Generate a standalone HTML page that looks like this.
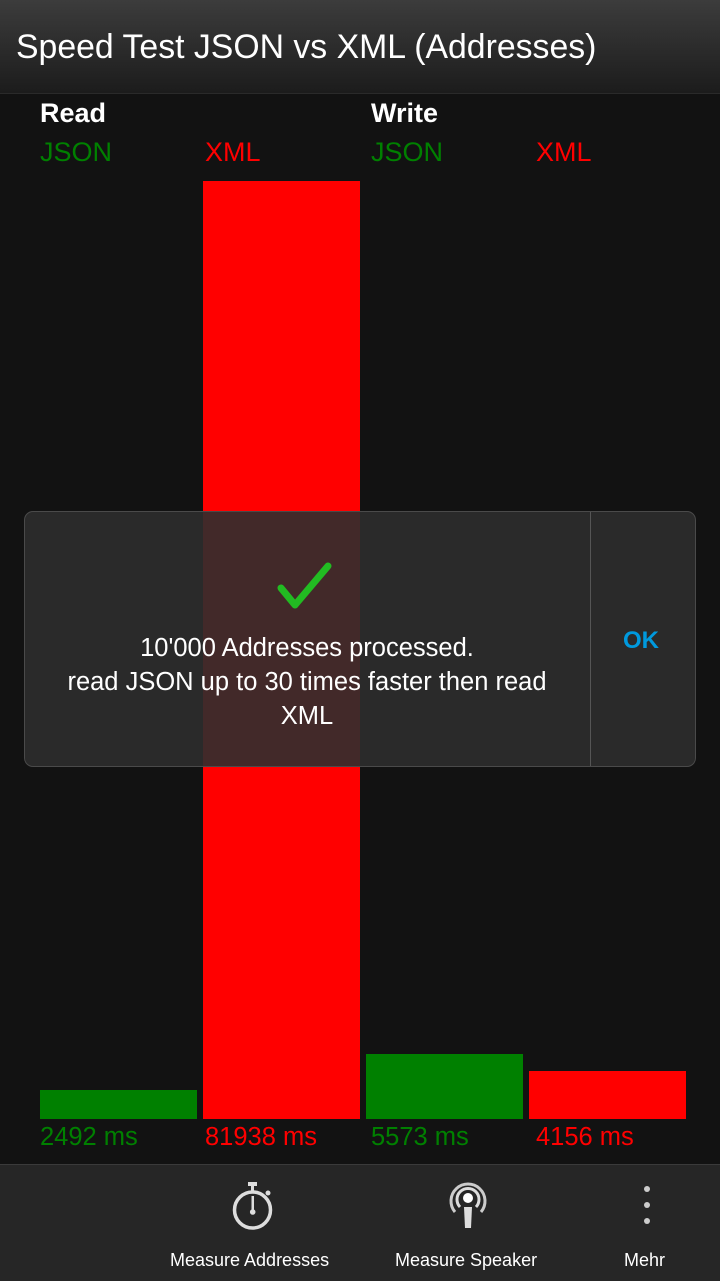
<!DOCTYPE html>
<html><head><meta charset="utf-8"><style>
body{margin:0;width:720px;height:1280px;background:#121212;font-family:"Liberation Sans",sans-serif;position:relative;overflow:hidden}
.t{position:absolute;white-space:nowrap}
.bar{position:absolute}
</style></head><body>
<div style="position:absolute;left:0;top:0;width:720px;height:93px;background:linear-gradient(#3c3c3c,#1c1c1c);border-bottom:1px solid #2a2a2a"></div>
<div class="t" style="left:16px;top:28px;font-size:33.8px;color:#fff">Speed Test JSON vs XML (Addresses)</div>
<div class="t" style="left:40px;top:98px;font-size:27px;font-weight:bold;color:#fff">Read</div>
<div class="t" style="left:371px;top:98px;font-size:27px;font-weight:bold;color:#fff">Write</div>
<div class="t" style="left:40px;top:137px;font-size:27px;color:#008000">JSON</div>
<div class="t" style="left:205px;top:137px;font-size:27px;color:#f00">XML</div>
<div class="t" style="left:371px;top:137px;font-size:27px;color:#008000">JSON</div>
<div class="t" style="left:536px;top:137px;font-size:27px;color:#f00">XML</div>
<div class="bar" style="left:40px;top:1090px;width:157px;height:29px;background:#008000"></div>
<div class="bar" style="left:203px;top:181px;width:157px;height:938px;background:#f00"></div>
<div class="bar" style="left:366px;top:1054px;width:157px;height:65px;background:#008000"></div>
<div class="bar" style="left:529px;top:1071px;width:157px;height:48px;background:#f00"></div>
<div class="t" style="left:40px;top:1123px;font-size:25.5px;color:#008000">2492 ms</div>
<div class="t" style="left:205px;top:1123px;font-size:25.5px;color:#f00">81938 ms</div>
<div class="t" style="left:371px;top:1123px;font-size:25.5px;color:#008000">5573 ms</div>
<div class="t" style="left:536px;top:1123px;font-size:25.5px;color:#f00">4156 ms</div>
<div style="position:absolute;left:24px;top:511px;width:670px;height:254px;border:1px solid #4a4a4a;border-radius:9px;background:rgba(45,45,45,0.9)"></div>
<div style="position:absolute;left:590px;top:512px;width:1px;height:254px;background:#555"></div>
<svg style="position:absolute;left:275px;top:560px" width="60" height="52"><path d="M6 28 L20 45 L53 6" stroke="#22bb22" stroke-width="7" fill="none" stroke-linecap="round" stroke-linejoin="round"/></svg>
<div class="t" style="left:24px;top:631px;width:566px;text-align:center;font-size:25.5px;line-height:34px;color:#fff;white-space:normal">10'000 Addresses processed.<br>read JSON up to 30 times faster then read<br>XML</div>
<div class="t" style="left:623px;top:627px;font-size:24px;font-weight:bold;color:#0099dd">OK</div>
<div style="position:absolute;left:0;top:1164px;width:720px;height:116px;background:#262626;border-top:1px solid #3a3a3a"></div>
<svg style="position:absolute;left:228px;top:1180px" width="50" height="52"><rect x="20" y="2" width="9" height="4" fill="#ddd"/><rect x="23" y="5" width="3" height="6" fill="#ddd"/><circle cx="24.5" cy="30" r="18" stroke="#ddd" stroke-width="3.5" fill="none"/><rect x="23.5" y="16" width="2.5" height="16" fill="#ddd"/><circle cx="24.7" cy="32" r="2.8" fill="#ddd"/><circle cx="40" cy="13" r="2.5" fill="#ddd"/></svg>
<svg style="position:absolute;left:444px;top:1178px" width="48" height="52"><path d="M11 34 A17 17 0 1 1 37 34" stroke="#ccc" stroke-width="3" fill="none"/><path d="M16 29 A11 11 0 1 1 32 29" stroke="#ddd" stroke-width="3" fill="none"/><circle cx="24" cy="20" r="5" fill="#fff"/><path d="M20 29 L28 29 L27 50 L21 50Z" fill="#ddd"/></svg>
<div style="position:absolute;left:644px;top:1186px;width:6px;height:6px;border-radius:3px;background:#ccc"></div>
<div style="position:absolute;left:644px;top:1202px;width:6px;height:6px;border-radius:3px;background:#ccc"></div>
<div style="position:absolute;left:644px;top:1218px;width:6px;height:6px;border-radius:3px;background:#ccc"></div>
<div class="t" style="left:170px;top:1250px;font-size:18px;color:#fff">Measure Addresses</div>
<div class="t" style="left:395px;top:1250px;font-size:18px;color:#fff">Measure Speaker</div>
<div class="t" style="left:624px;top:1250px;font-size:18px;color:#fff">Mehr</div>
</body></html>
